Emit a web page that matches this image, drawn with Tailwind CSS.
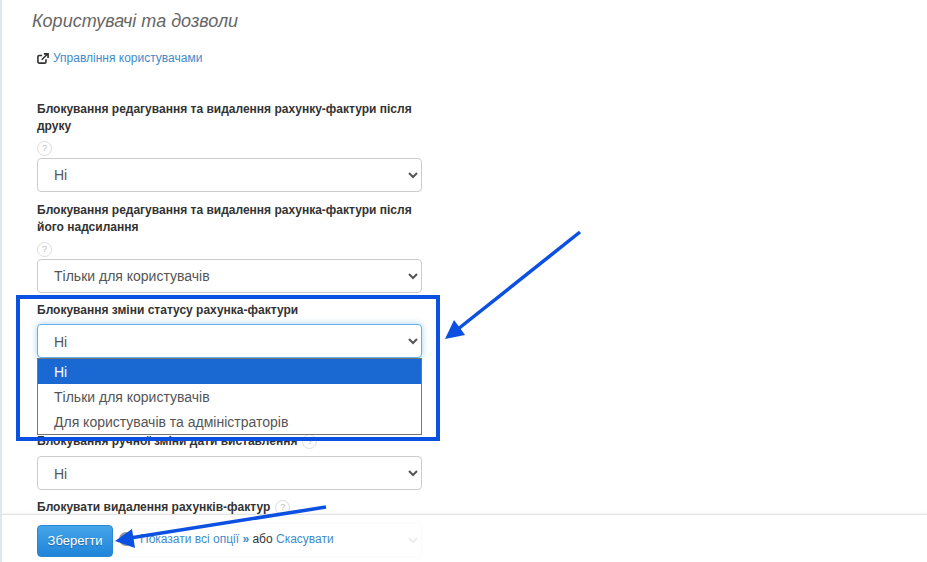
<!DOCTYPE html>
<html lang="uk">
<head>
<meta charset="utf-8">
<title>Користувачі та дозволи</title>
<script src="https://cdn.jsdelivr.net/npm/@tailwindcss/browser@4"></script>
</head>
<body class="bg-white font-['Liberation_Sans',Arial,sans-serif] text-[#333] overflow-hidden">
<div class="relative w-[927px] h-[562px] overflow-hidden border-l-2 border-[#dfe8f1]">

  <div class="pl-[31px] pt-[12px]">
    <h2 class="-ml-px text-[18px] leading-[19px] italic text-[#666]">Користувачі та дозволи</h2>

    <div class="mt-[18px] pl-[4px] h-[18px] flex items-center gap-[4px] text-[12px]">
      <svg class="w-[12px] h-[11px]" viewBox="0 0 14 13" fill="none" stroke="#333" stroke-width="1.9">
        <path d="M10.500 7.500v3a1.500 1.500 0 0 1-1.500 1.500H2.500A1.500 1.500 0 0 1 1 10.500V4.500A1.500 1.500 0 0 1 2.500 3H6"/>
        <path d="M5.500 8 12 1.500M8 1h5v5" />
      </svg>
      <a href="#" class="text-[#428bca]">Управління користувачами</a>
    </div>

    <form class="w-[385px] ml-[4px] mt-[34px] text-[12px]">
      <label class="block font-bold leading-[17.14px]">Блокування редагування та видалення рахунку-фактури після друку</label>
      <div class="mt-[6px] w-[15px] h-[15px] rounded-full border border-[#ddd] text-[#bbb] text-[9px] leading-[13px] text-center">?</div>
      <select class="block mt-[2px] w-full h-[34px] pl-[12px] text-[14px] text-[#555] bg-white border border-[#ccc] rounded-[4px]">
        <option>Ні</option>
      </select>

      <label class="block mt-[10px] font-bold leading-[17.14px]">Блокування редагування та видалення рахунка-фактури після його надсилання</label>
      <div class="mt-[5px] w-[15px] h-[15px] rounded-full border border-[#ddd] text-[#bbb] text-[9px] leading-[13px] text-center">?</div>
      <select class="block mt-[2px] w-full h-[34px] pl-[12px] text-[14px] text-[#555] bg-white border border-[#ccc] rounded-[4px]">
        <option>Тільки для користувачів</option>
      </select>

      <label class="block mt-[9px] font-bold leading-[17.14px]">Блокування зміни статусу рахунка-фактури</label>
      <div class="relative mt-[5.3px]">
        <select class="block w-full h-[34px] pl-[12px] pt-[2px] text-[14px] text-[#555] bg-white border border-[#66afe9] rounded-[4px] shadow-[0_0_6px_rgba(102,175,233,0.6)]">
          <option>Ні</option>
        </select>
        <ul class="absolute z-10 left-0 top-[34px] w-full h-[77px] bg-white border border-[#767676] text-[14px] text-[#555]">
          <li class="h-[25px] leading-[27px] pl-[16px] bg-[#1a68d1] text-white">Ні</li>
          <li class="h-[25px] leading-[27px] pl-[16px]">Тільки для користувачів</li>
          <li class="h-[25px] leading-[27px] pl-[16px]">Для користувачів та адміністраторів</li>
        </ul>
      </div>

      <div class="mt-[75px] flex items-center gap-[5px] h-[17px]">
        <label class="font-bold leading-[17.14px]">Блокування ручної зміни дати виставлення</label>
        <div class="w-[15px] h-[15px] rounded-full border border-[#ddd] text-[#bbb] text-[9px] leading-[13px] text-center">?</div>
      </div>
      <select class="block mt-[6px] w-full h-[34px] pl-[12px] pt-[2px] text-[14px] text-[#555] bg-white border border-[#ccc] rounded-[4px]">
        <option>Ні</option>
      </select>

      <div class="mt-[9px] flex items-center gap-[5px] h-[17px]">
        <label class="font-bold leading-[17.14px]">Блокувати видалення рахунків-фактур</label>
        <div class="w-[15px] h-[15px] rounded-full border border-[#ddd] text-[#bbb] text-[9px] leading-[13px] text-center">?</div>
      </div>
      <select class="block mt-[7px] w-full h-[34px] pl-[12px] text-[14px] text-[#555] bg-white border border-[#ccc] rounded-[4px]">
        <option>Ні</option>
      </select>
    </form>
  </div>

  <!-- sticky save bar -->
  <div class="absolute z-20 left-0 right-0 top-[514px] h-[48px] bg-white/90 border-t border-[#e2e2e2] shadow-[0_-1px_3px_rgba(0,0,0,0.05)] pl-[35px] pt-[10px] flex items-start">
    <button class="w-[76px] h-[32px] rounded-[4px] border border-[#2a86d0] bg-gradient-to-b from-[#45a5ea] to-[#1f84d8] text-white text-[13px] [text-shadow:0_1px_1px_rgba(0,0,0,0.3)]">Зберегти</button>
    <svg class="ml-[5px] mt-[6px] w-[16px] h-[16px]" viewBox="0 0 16 16" fill="#999"><circle cx="8" cy="8" r="7"/></svg>
    <div class="ml-[6px] mt-[5px] text-[12px] leading-[18px]">
      <a href="#" class="text-[#428bca]">Показати всі опції <b class="font-bold text-[#428bca]">»</b></a> або <a href="#" class="text-[#428bca]">Скасувати</a>
    </div>
  </div>

  <!-- annotation overlay -->
  <div class="absolute z-30 left-[14px] top-[295px] w-[424px] h-[146px] border-[4px] border-[#0b50e0]"></div>
  <svg class="absolute z-30 left-[-2px] top-0 w-[927px] h-[562px] pointer-events-none" viewBox="0 0 927 562" fill="#0b50e0" stroke="none">
    <path d="M580 232 458 329" stroke="#0b50e0" stroke-width="3.500" fill="none"/>
    <path d="M445 339 454 320 460 328 465 335Z"/>
    <path d="M326 507 130 538" stroke="#0b50e0" stroke-width="3.500" fill="none"/>
    <path d="M115 541 132 529 135 548Z"/>
  </svg>
</div>
</body>
</html>
